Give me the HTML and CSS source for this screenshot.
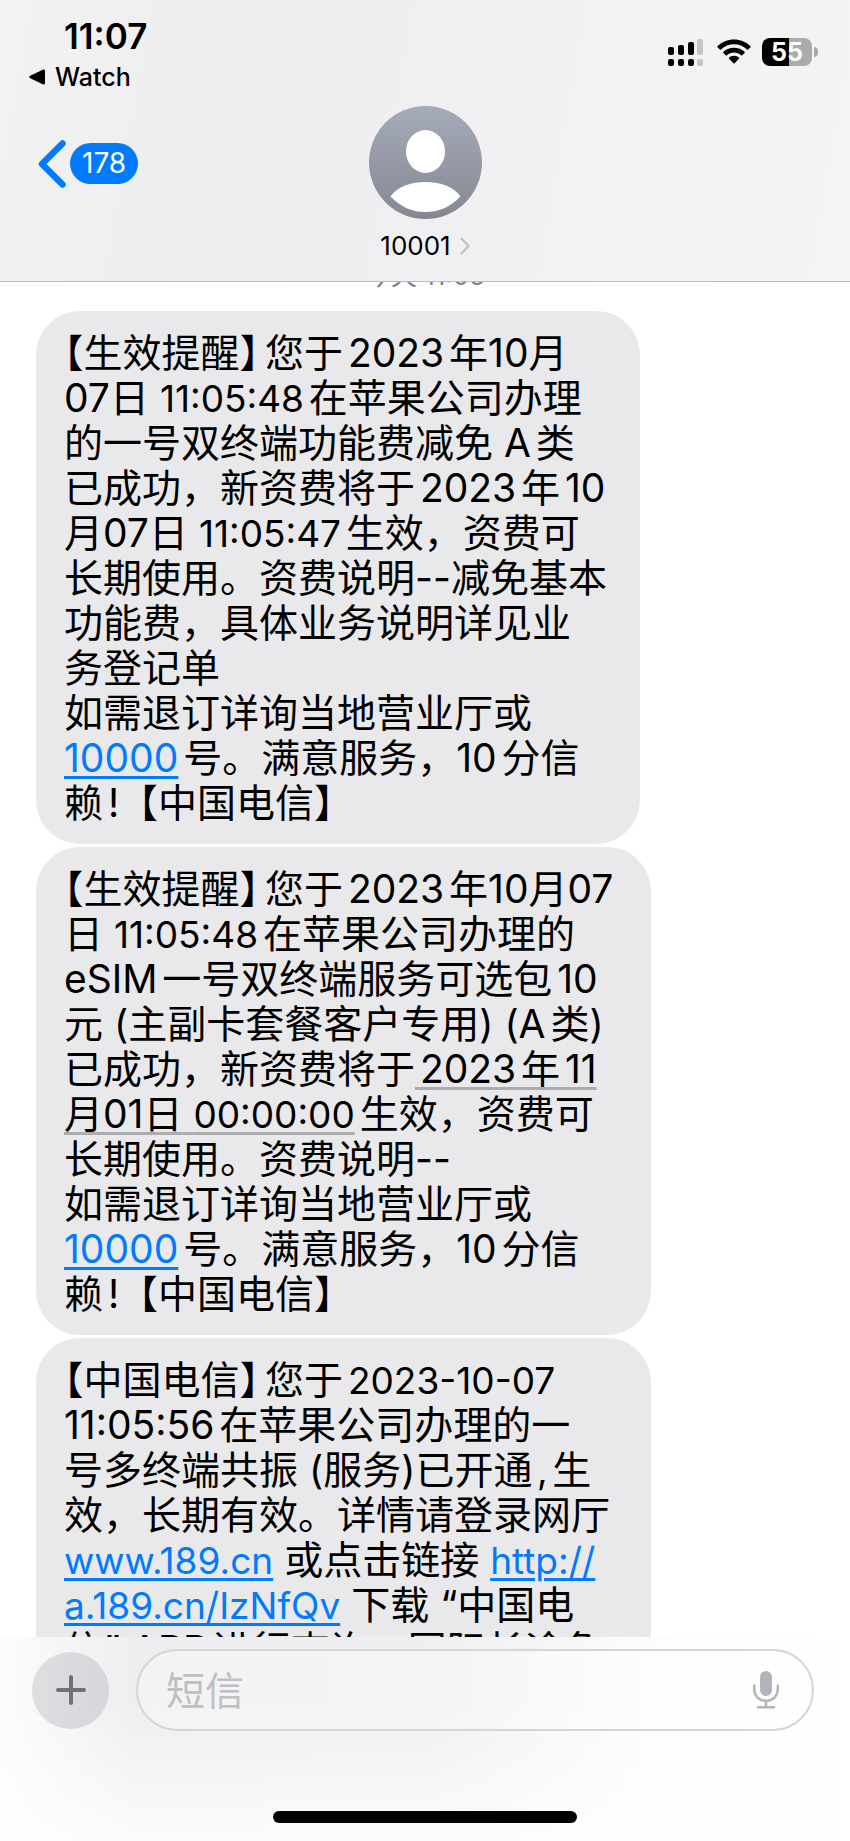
FILE: index.html
```html
<!DOCTYPE html>
<html lang="zh-CN">

<head>
    <meta charset="UTF-8">
    <meta name="viewport" content="width=device-width, initial-scale=1.0">
    <title>10001</title>
    <link rel="stylesheet" href="styles.css">
</head>

<body>

    <header class="header">
        <div class="status-bar">
            <div class="status-left">
                <div class="time">11:07</div>
                <a href="#" class="return-app">
                    <svg width="17" height="16" viewBox="0 0 17 16"><path d="M1.2 6.8 L13.8 .8 Q16 0 16 2 V14 Q16 16 13.8 15.2 L1.2 9.2 Q-.6 8 1.2 6.8Z" fill="#000"/></svg>
                    <span>Watch</span>
                </a>
            </div>
            <div class="status-icons">
                <!-- dual sim signal -->
                <svg class="signal" width="36" height="28" viewBox="0 0 36 28">
                    <rect x="0" y="9" width="6" height="8" rx="2"/>
                    <rect x="10" y="7" width="6" height="10" rx="2"/>
                    <rect x="20" y="4" width="6" height="13" rx="2"/>
                    <rect x="29" y="1" width="6" height="16" rx="2" fill="#c4c4c6"/>
                    <rect x="0" y="21" width="6" height="7" rx="2"/>
                    <rect x="10" y="21" width="6" height="7" rx="2"/>
                    <rect x="20" y="21" width="6" height="7" rx="2"/>
                    <rect x="29" y="21" width="6" height="7" rx="2" fill="#c4c4c6"/>
                </svg>
                <svg class="wifi" width="34" height="26" viewBox="0 0 34 26">
                    <path d="M17 .5 C23.3 .5 29.2 3 33.4 7.1 Q34 7.7 33.4 8.3 L31.2 10.5 Q30.6 11 30 10.5 C26.5 7.1 22 5.3 17 5.3 S7.5 7.1 4 10.5 Q3.4 11 2.8 10.5 L.6 8.3 Q0 7.7 .6 7.1 C4.8 3 10.7 .5 17 .5Z"/>
                    <path d="M17 8.7 C21 8.7 24.8 10.2 27.6 12.8 Q28.2 13.4 27.6 14 L25.2 16.3 Q24.6 16.8 24 16.3 C22 14.5 19.6 13.5 17 13.5 S12 14.5 10 16.3 Q9.4 16.8 8.8 16.3 L6.4 14 Q5.8 13.4 6.4 12.8 C9.2 10.2 13 8.7 17 8.7Z"/>
                    <path d="M17 16.8 C18.9 16.8 20.6 17.5 21.9 18.6 Q22.5 19.2 21.9 19.8 L17.6 24.2 Q17 24.8 16.4 24.2 L12.1 19.8 Q11.5 19.2 12.1 18.6 C13.4 17.5 15.1 16.8 17 16.8Z"/>
                </svg>
                <div class="battery">
                    <div class="battery-body">55</div>
                    <div class="battery-tip"></div>
                </div>
            </div>
        </div>

        <nav class="nav-bar">
            <a href="#" class="back">
                <svg width="28" height="48" viewBox="0 0 28 48"><path d="M24.5 3.5 L4 24 L24.5 44.5" fill="none" stroke="#007aff" stroke-width="6.5" stroke-linecap="round" stroke-linejoin="round"/></svg>
                <span class="badge">178</span>
            </a>
            <button type="button" class="contact">
                <svg class="avatar" width="113" height="113" viewBox="0 0 113 113">
                    <defs>
                        <linearGradient id="avatarFill" x1="0" y1="0" x2="0" y2="1">
                            <stop offset="0" stop-color="#a5abb9"/>
                            <stop offset="1" stop-color="#858892"/>
                        </linearGradient>
                    </defs>
                    <circle cx="56.5" cy="56.5" r="56.5" fill="url(#avatarFill)"/>
                    <ellipse cx="56.5" cy="45.5" rx="19.5" ry="21.5" fill="#fff"/>
                    <path d="M21.5 90.5 C29 80 43 76 56.5 76 S84 80 91.5 90.5 C81 101.5 69 106 56.5 106 S32 101.5 21.5 90.5Z" fill="#fff"/>
                </svg>
                <span class="contact-name">10001
                    <svg width="10" height="18" viewBox="0 0 10 18"><path d="M1.5 1.5 L8.5 9 L1.5 16.5" fill="none" stroke="#c0c0c4" stroke-width="2.2" stroke-linecap="round" stroke-linejoin="round"/></svg>
                </span>
            </button>
        </nav>
    </header>

    <main class="messages">
        <div class="timestamp">今天 11:05</div>

        <div class="bubble">
            <span class="half">【</span>生效提醒<span class="half close">】</span>您于2023年<span class="tight">10月<br>
            07日</span> <span class="num">11:05:48</span>在苹果公司办理<br>
            的一号双终端功能费减免 A类<br>
            已成功，新资费将于2023年10<br>
            <span class="tight">月07日</span> <span class="num">11:05:47</span>生效，资费可<br>
            长期使用。资费说明--减免基本<br>
            功能费，具体业务说明详见业<br>
            务登记单<br>
            如需退订详询当地营业厅或<br>
            <a href="tel:10000">10000</a>号。满意服务，10分信<br>
            赖!【中国电信】
        </div>

        <div class="bubble bubble-wide">
            <span class="half">【</span>生效提醒<span class="half close">】</span>您于2023年<span class="tight">10月07<br>
            日</span> <span class="num">11:05:48</span>在苹果公司办理的<br>
            eSIM一号双终端服务可选包10<br>
            元 (主副卡套餐客户专用) (A类)<br>
            已成功，新资费将于<a href="#" class="date">2023年11<br>
            <span class="tight">月01日</span> <span class="num">00:00:00</span></a>生效，资费可<br>
            长期使用。资费说明--<br>
            如需退订详询当地营业厅或<br>
            <a href="tel:10000">10000</a>号。满意服务，10分信<br>
            赖!【中国电信】
        </div>

        <div class="bubble bubble-wide">
            <span class="half">【</span>中国电信<span class="half close">】</span>您于<span class="num">2023-10-07</span><br>
            11:05:56在苹果公司办理的一<br>
            号多终端共振 (服务)已开通<span class="num">,</span>生<br>
            效，长期有效。详情请登录网厅<br>
            <a href="#" class="num">www.189.cn</a> 或点击链接 <a href="#" class="num">http://<br>
            a.189.cn/IzNfQv</a> 下载 “中国电<br>
            信” APP进行查询。国际长途免
        </div>
    </main>

    <footer class="footer">
        <form class="compose">
            <button type="button" class="add-button" aria-label="添加">
                <svg width="30" height="30" viewBox="0 0 30 30"><path d="M15 2 V28 M2 15 H28" stroke="#6f7079" stroke-width="4" stroke-linecap="round"/></svg>
            </button>
            <div class="message-box">
                <input type="text" class="message-input" placeholder="短信" aria-label="短信">
                <button type="button" class="mic-button" aria-label="听写">
                    <svg width="26" height="38" viewBox="0 0 26 38">
                        <rect x="7" y="0" width="12" height="25" rx="6" fill="#b0b5bb"/>
                        <path d="M1.2 14.5 V18 C1.2 25.5 6.5 29.8 13 29.8 S24.8 25.5 24.8 18 V14.5 M13 30 V36 M5 36.2 H21" fill="none" stroke="#b3b6ba" stroke-width="2.6" stroke-linecap="round"/>
                    </svg>
                </button>
            </div>
        </form>
        <div class="home-indicator"></div>
    </footer>

</body>

</html>
```
FILE: styles.css
```css
* {
    box-sizing: border-box;
}

body {
    margin: 0;
    height: 100vh;
    display: flex;
    flex-direction: column;
    background-color: #fff;
    color: #000;
    font-family: Inter, "Noto Sans CJK SC", sans-serif;
    overflow: hidden;
}

a {
    color: #007aff;
}

button {
    border: none;
    padding: 0;
    background: none;
    font-family: inherit;
    color: inherit;
    cursor: pointer;
}

svg {
    display: block;
}

/* Header */
.header {
    flex: none;
    background: linear-gradient(100deg, #f2f2f2 0%, #ededf0 30%, #f1f1f3 60%, #f4f4f4 100%);
    border-bottom: 1px solid #bcbcc0;
    padding-bottom: 20px;
}

.status-bar {
    display: flex;
    justify-content: space-between;
    align-items: flex-start;
    padding: 16px 32px 0 29px;
    height: 106px;
}

.time {
    font-size: 35px;
    font-weight: 600;
    line-height: 40px;
    padding-left: 35px;
}

.return-app {
    display: flex;
    align-items: center;
    gap: 9px;
    font-size: 25px;
    font-weight: 500;
    line-height: 42px;
    color: #000;
    text-decoration: none;
}

.status-icons {
    display: flex;
    align-items: center;
    height: 72px;
}

.signal {
    margin-right: 13px;
}

.wifi {
    margin-right: 11px;
}

.battery {
    display: flex;
    align-items: center;
    gap: 2px;
}

.battery-body {
    width: 50px;
    height: 28px;
    border-radius: 8px;
    background: linear-gradient(to right, #000 55%, #ababab 55%);
    color: #fff;
    font-size: 25px;
    font-weight: 700;
    line-height: 28px;
    text-align: center;
}

.battery-tip {
    width: 4px;
    height: 10px;
    border-radius: 0 4px 4px 0;
    background-color: #ababab;
}

.nav-bar {
    display: grid;
    grid-template-columns: 1fr auto 1fr;
    align-items: start;
    padding: 0 38px;
}

.back {
    display: flex;
    align-items: center;
    gap: 4px;
    height: 115px;
    text-decoration: none;
}

.badge {
    padding: 0 12px;
    border-radius: 21px;
    background-color: #007aff;
    color: #fff;
    font-size: 28px;
    line-height: 41px;
}

.contact {
    display: flex;
    flex-direction: column;
    align-items: center;
    gap: 12px;
}

.contact-name {
    display: flex;
    align-items: center;
    gap: 9px;
    font-size: 26px;
    line-height: 30px;
}

/* Messages */
.messages {
    flex: 1;
    min-height: 0;
    overflow: hidden;
    display: flex;
    flex-direction: column;
    align-items: flex-start;
    gap: 3px;
    padding: 0 36px;
}

.timestamp {
    align-self: center;
    margin-top: -21px;
    margin-bottom: 17px;
    font-size: 26px;
    line-height: 30px;
    color: #808085;
}

.bubble {
    flex: none;
    padding: 19px 33px 19px 28px;
    border-radius: 44px;
    background-color: #e9e9eb;
    font-size: 39px;
    line-height: 45px;
    white-space: nowrap;
    text-autospace: normal;
}

.bubble-wide {
    min-width: 79%;
}

.bubble a {
    text-decoration-thickness: 3px;
    text-underline-offset: 4px;
}

.bubble .date {
    color: #000;
    text-decoration-color: #acacae;
}

/* latin text looks bigger than the chinese, so bring it down a bit */
.num {
    font-size: 37px;
    line-height: 1;
}

.tight {
    text-autospace: no-autospace;
}

/* half-width brackets at the start of a message */
.half {
    font-feature-settings: "halt";
}

.close {
    margin-right: 6px;
}

/* Footer */
.footer {
    flex: none;
    padding: 12px 0 18px;
    background: linear-gradient(to bottom, rgba(255, 255, 255, 0) 30%, rgba(255, 255, 255, 0.8) 100%),
        linear-gradient(to right, #fcfcfc 0%, #eeeef0 16%, #efeff0 50%, #fdfdfd 78%, #fff 100%);
}

.compose {
    display: flex;
    align-items: center;
    gap: 27px;
    padding: 0 36px 0 32px;
}

.add-button {
    flex: none;
    width: 77px;
    height: 77px;
    border-radius: 50%;
    background: linear-gradient(to right, #dfdfe2, #d6d6db);
    display: flex;
    align-items: center;
    justify-content: center;
}

.message-box {
    flex: 1;
    min-width: 0;
    display: flex;
    align-items: center;
    height: 82px;
    padding: 0 33px 0 28px;
    border: 2px solid #d5d5d7;
    border-radius: 41px;
    background-color: rgba(255, 255, 255, 0.3);
}

.message-input {
    flex: 1;
    min-width: 0;
    border: none;
    outline: none;
    padding: 0;
    background: none;
    font-family: inherit;
    font-size: 39px;
}

.message-input::placeholder {
    color: #bfbfc3;
}

.home-indicator {
    width: 304px;
    height: 12px;
    margin: 80px auto 0;
    border-radius: 6px;
    background-color: #000;
}
```
